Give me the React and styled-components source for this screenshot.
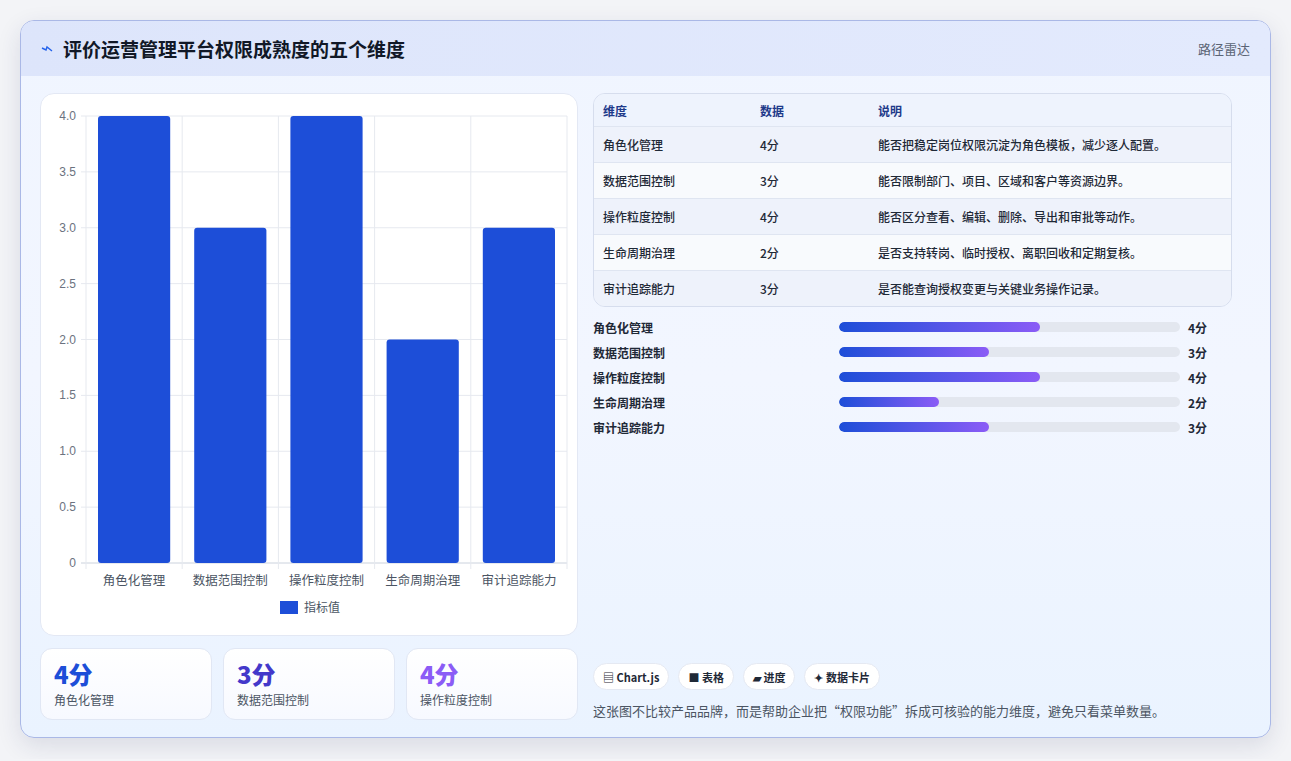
import React from 'react';
import styled, { createGlobalStyle } from 'styled-components';

const GlobalStyle = createGlobalStyle`
  body { margin: 0; background: #f3f4f7; font-family: "Noto Sans CJK SC", "Noto Sans", sans-serif; }
`;

const data = [
  { name: '角色化管理', v: 4, desc: '能否把稳定岗位权限沉淀为角色模板，减少逐人配置。' },
  { name: '数据范围控制', v: 3, desc: '能否限制部门、项目、区域和客户等资源边界。' },
  { name: '操作粒度控制', v: 4, desc: '能否区分查看、编辑、删除、导出和审批等动作。' },
  { name: '生命周期治理', v: 2, desc: '是否支持转岗、临时授权、离职回收和定期复核。' },
  { name: '审计追踪能力', v: 3, desc: '是否能查询授权变更与关键业务操作记录。' },
];

const Page = styled.div`
  padding: 20px 20px 21px 20px;
`;

const Card = styled.div`
  height: 718px;
  box-sizing: border-box;
  border: 1px solid #aab8e6;
  border-radius: 14px;
  background: linear-gradient(180deg, #f0f5ff 0%, #f2f6ff 50%, #eaf3ff 100%);
  box-shadow: 0 8px 24px rgba(30, 40, 90, 0.12);
  overflow: hidden;
  display: flex;
  flex-direction: column;
`;

const Header = styled.div`
  height: 55px;
  flex: none;
  background: linear-gradient(90deg, #dde5fb, #e3eafd);
  display: flex;
  align-items: center;
  justify-content: space-between;
  padding: 0 20px;
`;

const Title = styled.h1`
  margin: 0;
  font-size: 19px;
  font-weight: 700;
  color: #111827;
  display: flex;
  align-items: center;
  gap: 10px;
`;

const Tag = styled.span`
  font-size: 13px;
  color: #5b6475;
`;

const Body = styled.div`
  flex: 1;
  display: grid;
  grid-template-columns: 538px 1fr;
  gap: 15px;
  padding: 17px 19px 18px 19px;
`;

const Left = styled.div`
  display: flex;
  flex-direction: column;
  gap: 12px;
`;

const ChartCard = styled.div`
  height: 543px;
  box-sizing: border-box;
  background: #fff;
  border: 1px solid #e3e8f4;
  border-radius: 14px;
`;

const Stats = styled.div`
  display: grid;
  grid-template-columns: repeat(3, 1fr);
  gap: 11px;
`;

const Stat = styled.div`
  height: 72px;
  box-sizing: border-box;
  background: linear-gradient(180deg, #fff, #f7f9ff);
  border: 1px solid #e1e7f4;
  border-radius: 12px;
  padding: 10px 13px;
`;

const StatNum = styled.div`
  font-size: 24px;
  font-weight: 800;
  line-height: 30px;
  color: ${(p) => p.color};
`;

const StatLabel = styled.div`
  font-size: 12px;
  color: #4b5563;
  margin-top: 2px;
`;

const Right = styled.div`
  display: flex;
  flex-direction: column;
`;

const Table = styled.div`
  border: 1px solid #d6dded;
  border-radius: 12px;
  overflow: hidden;
  margin-right: 19px;
`;

const Row = styled.div`
  display: grid;
  grid-template-columns: 157px 118px 1fr;
  height: ${(p) => (p.head ? 32 : 35)}px;
  align-items: center;
  padding-left: 9px;
  font-size: 12px;
  font-weight: ${(p) => (p.head ? 700 : 500)};
  color: ${(p) => (p.head ? '#1e3a8a' : '#1f2937')};
  background: ${(p) => (p.head ? '#eef3fd' : p.alt ? '#f8fafd' : '#eef2fb')};
  border-top: ${(p) => (p.head ? 'none' : '1px solid #dfe5f1')};
`;

const Bars = styled.div`
  display: flex;
  flex-direction: column;
  gap: 7px;
  margin-top: 11px;
`;

const BarRow = styled.div`
  display: grid;
  grid-template-columns: 246px 341px 1fr;
  gap: 0;
  align-items: center;
  height: 18px;
  font-size: 12px;
  font-weight: 600;
  color: #1f2937;
`;

const Track = styled.div`
  height: 10px;
  border-radius: 5px;
  background: #e3e7ef;
  overflow: hidden;
`;

const Fill = styled.div`
  height: 100%;
  border-radius: 5px;
  background: linear-gradient(90deg, #1d4ed8, #8b5cf6);
`;

const BarVal = styled.span`
  padding-left: 8px;
  font-weight: 700;
`;

const Spacer = styled.div`
  flex: 1;
`;

const Chips = styled.div`
  display: flex;
  gap: 9px;
`;

const Chip = styled.span`
  height: 27px;
  box-sizing: border-box;
  padding: 0 9px;
  border-radius: 14px;
  background: #fff;
  border: 1px solid #e5e9f2;
  display: inline-flex;
  align-items: center;
  gap: 4px;
  font-size: 11px;
  font-weight: 600;
  color: #1f2937;
`;

const Note = styled.p`
  margin: 11px 0 0;
  font-size: 13px;
  color: #4b5563;
`;

function BarChart() {
  const x0 = 45, x1 = 526, y0 = 22, y1 = 469;
  const ticks = [0, 0.5, 1, 1.5, 2, 2.5, 3, 3.5, 4];
  const cw = (x1 - x0) / 5;
  const yOf = (v) => y1 - (v / 4) * (y1 - y0);
  return (
    <svg width="538" height="541" style={{ display: 'block' }}>
      {ticks.map((t) => (
        <g key={t}>
          <line x1={x0 - 5} x2={x1} y1={yOf(t)} y2={yOf(t)} stroke={t === 0 ? '#cbd2dd' : '#e6e9ef'} />
          <text x={x0 - 10} y={yOf(t) + 4} textAnchor="end" fontSize="12" fill="#6b7280" fontFamily="Liberation Sans, sans-serif">
            {t === 0 ? '0' : t.toFixed(1)}
          </text>
        </g>
      ))}
      {[0, 1, 2, 3, 4, 5].map((i) => (
        <line key={i} x1={x0 + i * cw} x2={x0 + i * cw} y1={y0} y2={y1 + 6} stroke="#e6e9ef" />
      ))}
      {data.map((d, i) => (
        <g key={d.name}>
          <rect x={x0 + i * cw + 12} y={yOf(d.v)} width={cw - 24} height={y1 - yOf(d.v)} rx="3" fill="#1d4ed8" />
          <text x={x0 + i * cw + cw / 2} y={y1 + 22} textAnchor="middle" fontSize="12.5" fill="#4b5563">{d.name}</text>
        </g>
      ))}
      <rect x="239" y="507" width="18" height="13" fill="#1d4ed8" />
      <text x="263" y="518" fontSize="12" fill="#4b5563">指标值</text>
    </svg>
  );
}

export default function App() {
  return (
    <Page>
      <GlobalStyle />
      <Card>
        <Header>
          <Title>
            <svg width="12" height="12" viewBox="0 0 12 12"><path d="M1 5 L5 7 L6 4 L11 8" stroke="#2563eb" strokeWidth="1.4" fill="none" /></svg>
            评价运营管理平台权限成熟度的五个维度
          </Title>
          <Tag>路径雷达</Tag>
        </Header>
        <Body>
          <Left>
            <ChartCard><BarChart /></ChartCard>
            <Stats>
              <Stat><StatNum color="#1d4ed8">4分</StatNum><StatLabel>角色化管理</StatLabel></Stat>
              <Stat><StatNum color="#4338ca">3分</StatNum><StatLabel>数据范围控制</StatLabel></Stat>
              <Stat><StatNum color="#8b5cf6">4分</StatNum><StatLabel>操作粒度控制</StatLabel></Stat>
            </Stats>
          </Left>
          <Right>
            <Table>
              <Row head><span>维度</span><span>数据</span><span>说明</span></Row>
              {data.map((d, i) => (
                <Row key={d.name} alt={i % 2 === 1}><span>{d.name}</span><span>{d.v}分</span><span>{d.desc}</span></Row>
              ))}
            </Table>
            <Bars>
              {data.map((d) => (
                <BarRow key={d.name}>
                  <span>{d.name}</span>
                  <Track><Fill style={{ width: `${d.v * 14.7}%` }} /></Track>
                  <BarVal>{d.v}分</BarVal>
                </BarRow>
              ))}
            </Bars>
            <Spacer />
            <Chips>
              <Chip>▤ Chart.js</Chip>
              <Chip>■ 表格</Chip>
              <Chip>▰ 进度</Chip>
              <Chip>✦ 数据卡片</Chip>
            </Chips>
            <Note>这张图不比较产品品牌，而是帮助企业把“权限功能”拆成可核验的能力维度，避免只看菜单数量。</Note>
          </Right>
        </Body>
      </Card>
    </Page>
  );
}
